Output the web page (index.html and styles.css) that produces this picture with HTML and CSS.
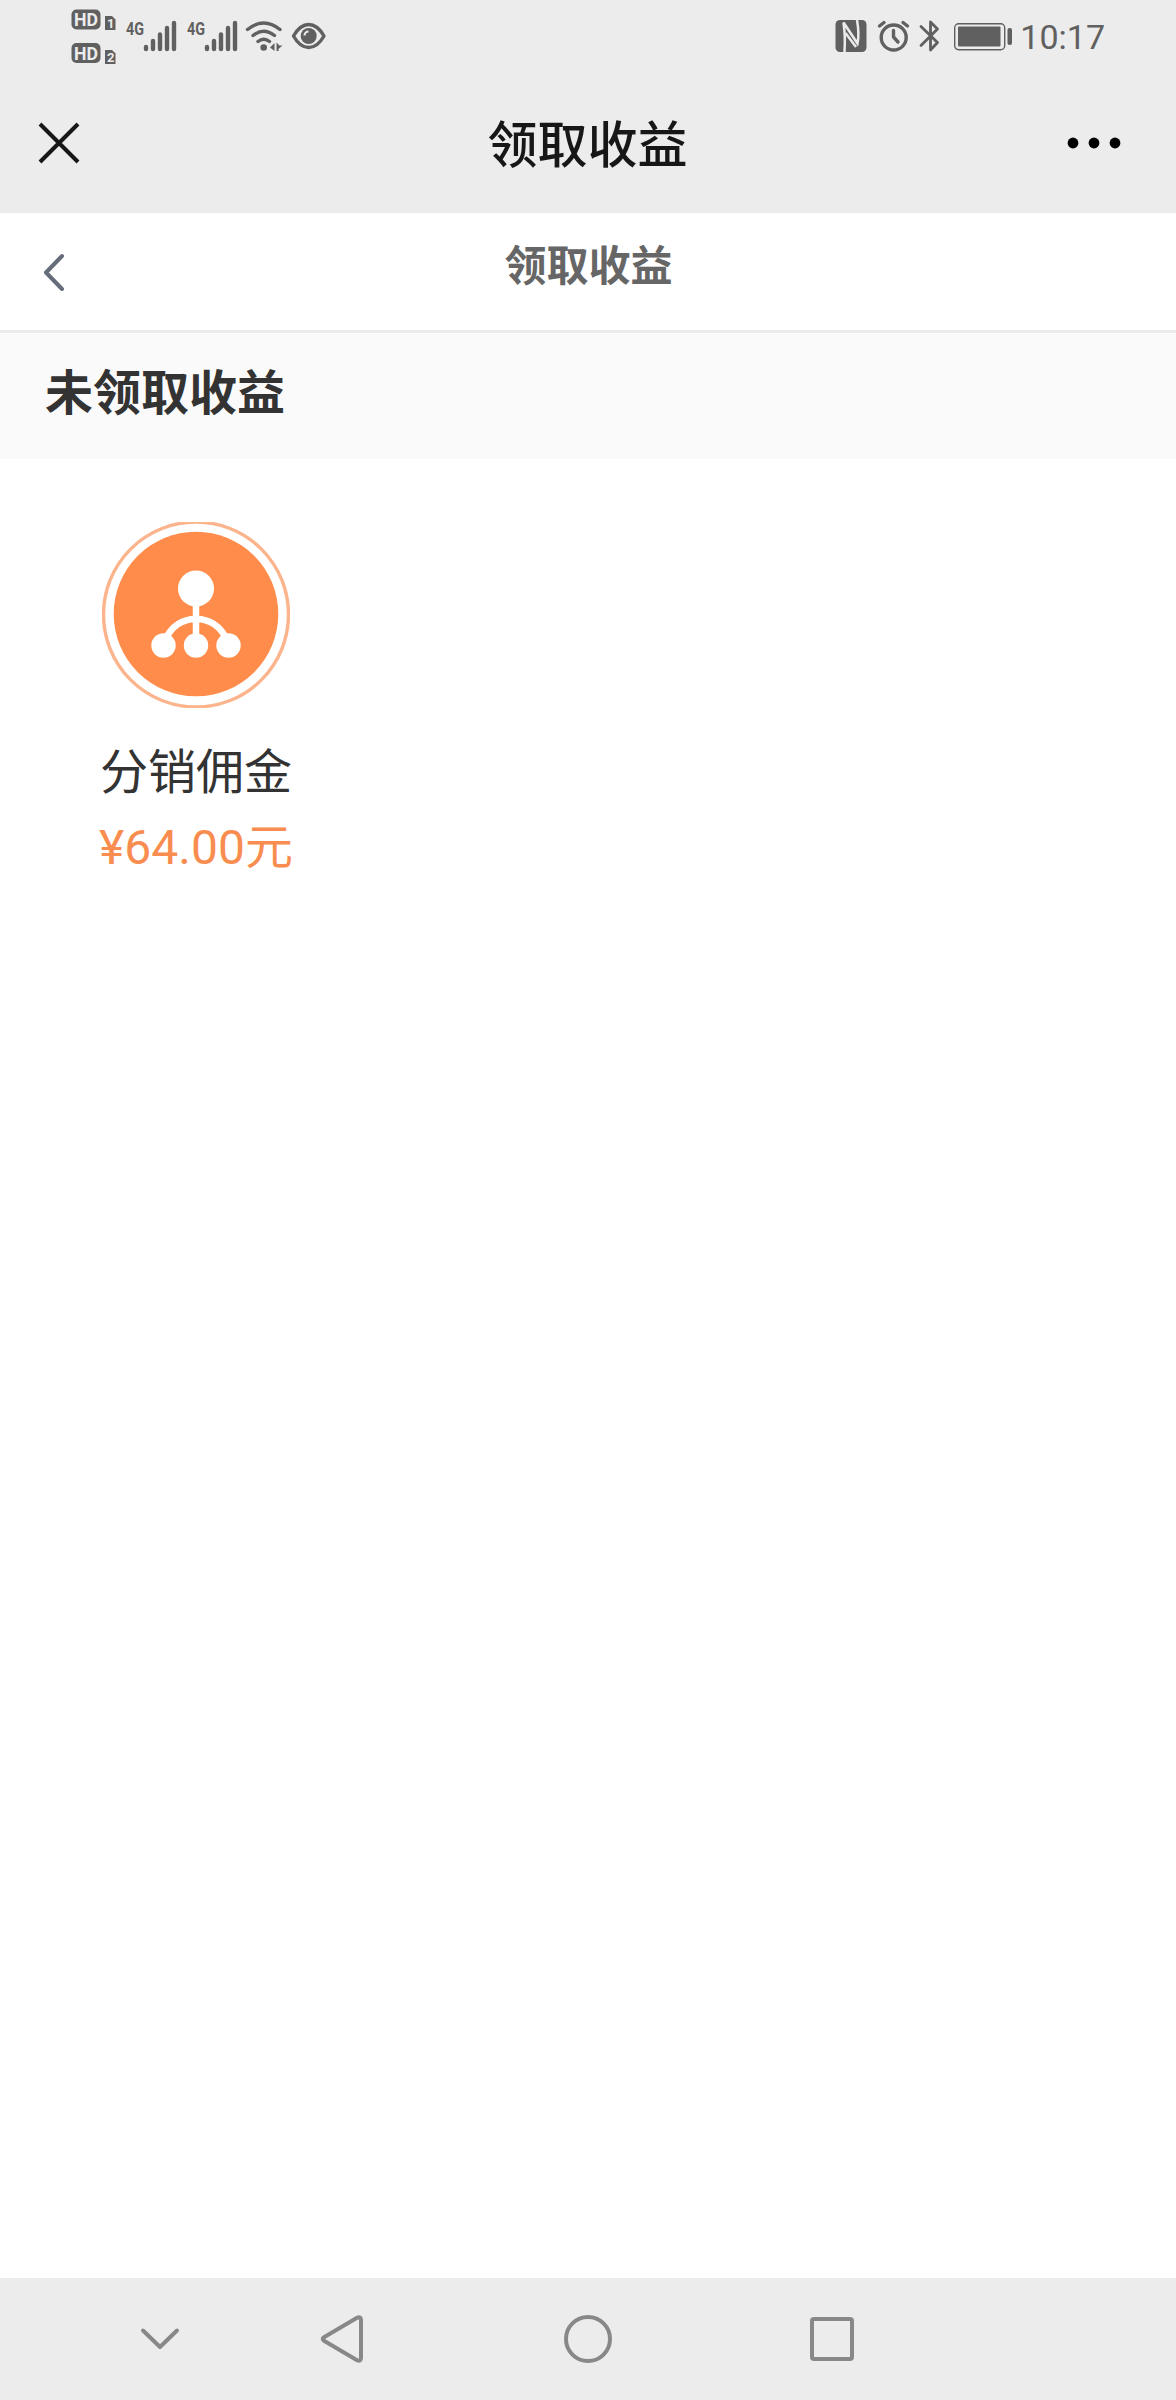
FILE: index.html
```
<!DOCTYPE html>
<html lang="zh-CN">
<head>
  <meta charset="UTF-8">
  <meta name="viewport" content="width=device-width, initial-scale=1.0">
  <title>领取收益</title>
  <link rel="stylesheet" href="styles.css">
</head>
<body>
  <!-- 状态栏 -->
  <div class="status-bar">
    <div class="status-left">
      <svg width="46" height="72" viewBox="0 0 46 72">
        <rect x="0.5" y="9.5" width="29" height="20" rx="5"/>
        <text class="hd" x="3" y="26" textLength="24" lengthAdjust="spacingAndGlyphs">HD</text>
        <path d="M34 16h7l3.500 3.500V30H34z"/>
        <text class="sim" x="36" y="28">1</text>
        <rect x="0.5" y="43" width="29" height="20" rx="5"/>
        <text class="hd" x="3" y="59.500" textLength="24" lengthAdjust="spacingAndGlyphs">HD</text>
        <path d="M34 50h7l3.500 3.500V64H34z"/>
        <text class="sim" x="36" y="62">2</text>
      </svg>
      <svg class="signal" width="51" height="72" viewBox="0 0 51 72">
        <text class="net" x="-1" y="34.500" textLength="18" lengthAdjust="spacingAndGlyphs">4G</text>
        <path class="bars" d="M19 47v2M26 41v8M33 34.500v14.500M40 28v21M47 23v26"/>
      </svg>
      <svg class="signal" width="51" height="72" viewBox="0 0 51 72">
        <text class="net" x="-1" y="34.500" textLength="18" lengthAdjust="spacingAndGlyphs">4G</text>
        <path class="bars" d="M19 47v2M26 41v8M33 34.500v14.500M40 28v21M47 23v26"/>
      </svg>
      <svg class="wifi" width="38" height="72" viewBox="0 0 38 72">
        <path class="line" d="M1.500 29.500Q17.700 16.500 34 29.500M7 35.500Q17.700 27 28.500 35.500M12 41.500Q17.700 37 23.500 41.500"/>
        <circle cx="17.700" cy="47.500" r="3.300"/>
        <path d="M24 47.500l4.500-4.500v8zM30.500 42.500v8.500h2v-2l4-3.500h-3z"/>
      </svg>
      <svg class="eye" width="34" height="72" viewBox="0 0 34 72">
        <path class="line" d="M1.500 36Q8 24.500 16.700 24.500T32 36Q25.500 47.500 16.700 47.500T1.500 36z"/>
        <circle cx="16.700" cy="36" r="8"/>
        <path class="shine" d="M12.500 35.500a4 4 0 0 1 4-4"/>
      </svg>
    </div>
    <div class="status-right">
      <svg width="32" height="72" viewBox="0 0 32 72">
        <rect x="0.500" y="20" width="31" height="32" rx="4.500"/>
        <path class="cut nfc" d="M9.500 52Q10.500 36 8.500 22.500L22.500 43.500Q24.500 34 22 20"/>
        <path class="cut nfc" d="M10.500 33l10.500 14"/>
      </svg>
      <svg class="alarm" width="32" height="72" viewBox="0 0 32 72">
        <circle class="line" cx="15.700" cy="37.500" r="12.500"/>
        <path class="line" d="M15.500 30.500v6.500l4.500 5M1.500 26l4.500-3.500M25 22.500l4.500 3.500"/>
      </svg>
      <svg class="bluetooth" width="22" height="72" viewBox="0 0 22 72">
        <path class="line" d="M2 26.500l16.500 16L11.500 50V22l7 7L2 45.500"/>
      </svg>
      <svg class="battery" width="60" height="72" viewBox="0 0 60 72">
        <rect class="case" x="1.700" y="23.700" width="50" height="26" rx="4"/>
        <rect x="5" y="26.500" width="42.500" height="20" rx="1"/>
        <rect x="54.500" y="28" width="4.500" height="17" rx="2"/>
      </svg>
      <span class="time">10:17</span>
    </div>
  </div>

  <!-- 微信标题栏 -->
  <div class="title-bar">
    <svg class="close" width="42" height="42" viewBox="0 0 42 42">
      <path d="M2 2l38 38M40 2L2 40"/>
    </svg>
    <h1>领取收益</h1>
    <svg class="more" width="54" height="12" viewBox="0 0 54 12">
      <circle cx="6" cy="6" r="5.400"/>
      <circle cx="27" cy="6" r="5.400"/>
      <circle cx="48" cy="6" r="5.400"/>
    </svg>
  </div>

  <header class="page-header">
    <svg class="back" width="22" height="38" viewBox="0 0 22 38">
      <path d="M19 3L3 19.500l16 16.500"/>
    </svg>
    <h2>领取收益</h2>
  </header>

  <h3 class="section-title">未领取收益</h3>

  <main class="income-list">
    <div class="income-item">
      <svg class="income-icon" width="188" height="186" viewBox="0 0 188 186">
        <circle class="ring" cx="94" cy="92.500" r="92.500"/>
        <circle class="disc" cx="94" cy="92" r="82.300"/>
        <circle cx="94" cy="66.500" r="18"/>
        <path class="branch" d="M94 80v40M63 118Q73 97 94 97T125 118"/>
        <circle cx="61.500" cy="123.500" r="12.200"/>
        <circle cx="94" cy="123.500" r="12.200"/>
        <circle cx="126.500" cy="123.500" r="12.200"/>
      </svg>
      <div class="income-name">分销佣金</div>
      <div class="income-money">¥64.00元</div>
    </div>
  </main>

  <!-- 系统导航键 -->
  <nav class="nav-bar">
    <svg class="key-hide" width="40" height="24" viewBox="0 0 40 24">
      <path d="M3 3.500L20 20 37 3.500"/>
    </svg>
    <svg class="key-back" width="44" height="50" viewBox="0 0 44 50">
      <path d="M4 23.200L37.500 3.600Q41 2.500 41 6v38q0 3.500-3.500 2.400L4 26.800Q1.500 25 4 23.200z"/>
    </svg>
    <svg class="key-home" width="50" height="50" viewBox="0 0 50 50">
      <circle cx="25" cy="25" r="22"/>
    </svg>
    <svg class="key-recent" width="46" height="46" viewBox="0 0 46 46">
      <rect x="3" y="3" width="40" height="40" rx="2"/>
    </svg>
  </nav>
</body>
</html>
```
FILE: styles.css
```
* {
  box-sizing: border-box;
}
body {
  margin: 0;
  min-height: 2400px;
  display: flex;
  flex-direction: column;
  background-color: #fff;
  color: #333;
  font-family: Roboto, "Noto Sans CJK SC", sans-serif;
}
h1, h2, h3 {
  margin: 0;
}
svg {
  display: block;
  flex: none;
}

/* 状态栏 */
.status-bar {
  height: 72px;
  padding: 0 71px;
  display: flex;
  justify-content: space-between;
  background-color: #ececec;
  color: #606060;
}
.status-left, .status-right {
  display: flex;
}
.status-bar svg {
  fill: #606060;
  overflow: visible;
}
.status-bar .line {
  fill: none;
  stroke: #606060;
  stroke-width: 3.4;
  stroke-linecap: round;
  stroke-linejoin: round;
}
.status-bar .bluetooth .line {
  stroke-width: 2.8;
}
.status-bar .hd {
  fill: #ececec;
  font-size: 19px;
  font-weight: 700;
}
.status-bar .sim {
  fill: #ececec;
  font-size: 13px;
  font-weight: 700;
}
.net {
  font-size: 19px;
  font-weight: 700;
}
.bars {
  stroke: #606060;
  stroke-width: 4.4;
  stroke-linecap: round;
}
.signal {
  margin-left: 10px;
}
.wifi {
  margin-left: 7px;
}
.eye {
  margin-left: 8px;
}
.shine, .cut {
  fill: none;
  stroke: #ececec;
  stroke-width: 2.2;
}
.cut.nfc {
  stroke-width: 2.5;
}
.alarm {
  margin-left: 11px;
}
.bluetooth {
  margin-left: 9px;
}
.battery {
  margin-left: 12px;
}
.battery .case {
  fill: none;
  stroke: #606060;
  stroke-width: 1.4;
}
.time {
  margin-left: 7px;
  font-size: 34px;
  line-height: 74px;
}

/* 标题栏 */
.title-bar {
  height: 141px;
  padding: 0 55px 0 38px;
  display: grid;
  grid-template-columns: 54px 1fr 54px;
  align-items: center;
  background-color: #ececec;
}
.title-bar h1 {
  padding: 6px 0 0 16px;
  font-size: 50px;
  font-weight: 500;
  line-height: 72px;
  text-align: center;
  color: #171717;
}
.close {
  stroke: #171717;
  stroke-width: 4;
}

/* 页面头部 */
.page-header {
  height: 120px;
  padding: 0 43px;
  display: grid;
  grid-template-columns: 22px 1fr 22px;
  align-items: center;
  border-bottom: 3px solid #ebebeb;
}
.page-header h2 {
  padding: 0 0 9px 1px;
  font-size: 42px;
  font-weight: 700;
  line-height: 60px;
  text-align: center;
  color: #666;
}
.back {
  fill: none;
  stroke: #666c7a;
  stroke-width: 4;
  stroke-linecap: round;
  stroke-linejoin: round;
}
.section-title {
  height: 126px;
  padding-left: 45px;
  background-color: #fafafa;
  font-size: 48px;
  font-weight: 700;
  line-height: 122px;
}

/* 收益列表 */
.income-list {
  flex: 1;
  padding-top: 63px;
  display: grid;
  grid-template-columns: repeat(3, 1fr);
  align-content: start;
}
.income-item {
  display: flex;
  flex-direction: column;
  align-items: center;
}
.income-icon {
  fill: #fff;
}
.income-icon .ring {
  fill: #fff;
  stroke: #fcb48c;
  stroke-width: 3.4;
}
.income-icon .disc {
  fill: #ff8c4a;
}
.income-icon .branch {
  fill: none;
  stroke: #fff;
  stroke-width: 6.5;
}
.income-name {
  margin-top: 29px;
  font-size: 48px;
  line-height: 72px;
}
.income-money {
  font-size: 48px;
  line-height: 78px;
  color: #f98d50;
}

/* 导航键 */
.nav-bar {
  height: 122px;
  padding-left: 140px;
  display: flex;
  align-items: center;
  background-color: #ececec;
}
.nav-bar svg {
  fill: none;
  stroke: #888;
  stroke-width: 4;
  stroke-linecap: round;
  stroke-linejoin: round;
}
.key-back {
  margin-left: 140px;
}
.key-home {
  margin-left: 199px;
}
.key-recent {
  margin-left: 196px;
}
```
